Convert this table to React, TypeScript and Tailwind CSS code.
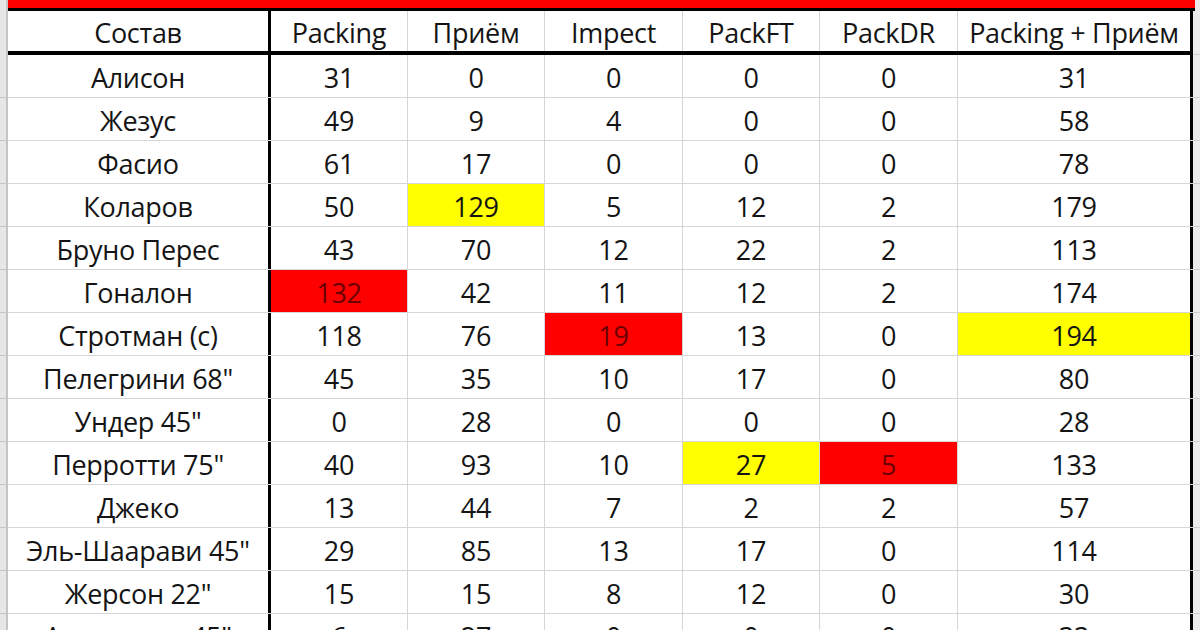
type Mark = "y" | "r" | undefined

type Row = {
  name: string
  vals: (string | [string, Mark])[]
}

const rows: Row[] = [
  { name: "Алисон", vals: ["31", "0", "0", "0", "0", "31"] },
  { name: "Жезус", vals: ["49", "9", "4", "0", "0", "58"] },
  { name: "Фасио", vals: ["61", "17", "0", "0", "0", "78"] },
  { name: "Коларов", vals: ["50", ["129", "y"], "5", "12", "2", "179"] },
  { name: "Бруно Перес", vals: ["43", "70", "12", "22", "2", "113"] },
  { name: "Гоналон", vals: [["132", "r"], "42", "11", "12", "2", "174"] },
  { name: "Стротман (с)", vals: ["118", "76", ["19", "r"], "13", "0", ["194", "y"]] },
  { name: "Пелегрини 68\"", vals: ["45", "35", "10", "17", "0", "80"] },
  { name: "Ундер 45\"", vals: ["0", "28", "0", "0", "0", "28"] },
  { name: "Перротти 75\"", vals: ["40", "93", "10", ["27", "y"], ["5", "r"], "133"] },
  { name: "Джеко", vals: ["13", "44", "7", "2", "2", "57"] },
  { name: "Эль-Шаарави 45\"", vals: ["29", "85", "13", "17", "0", "114"] },
  { name: "Жерсон 22\"", vals: ["15", "15", "8", "12", "0", "30"] },
  { name: "Антенуччи 45\"", vals: ["6", "27", "0", "0", "0", "33"] },
]

const headers = ["Packing", "Приём", "Impect", "PackFT", "PackDR", "Packing + Приём"]

// widths incl. borders, measured off the sheet
const widths = ["w-[137px]", "w-[137px]", "w-[138px]", "w-[137px]", "w-[138px]"]

function Cell({ value, idx }: { value: string | [string, Mark]; idx: number }) {
  const text = Array.isArray(value) ? value[0] : value
  const mark = Array.isArray(value) ? value[1] : undefined
  const last = idx === 5
  return (
    <div
      className={
        "h-full flex items-center justify-center shrink-0 pt-[3px] " +
        (last ? "w-[235px] border-r-[3px] border-black " : widths[idx] + " border-r border-[#d6d6d6] ") +
        (mark === "y" ? "bg-[#ffff00] text-[#141414]" : mark === "r" ? "bg-[#ff0000] text-[#6b0000]" : "text-[#141414]")
      }
    >
      {text}
    </div>
  )
}

export default function App() {
  return (
    <div
      className="w-[1200px] h-[630px] overflow-hidden bg-white flex flex-col text-[27px] leading-none tracking-[-0.3px]"
      style={{ fontFamily: "'Open Sans', Lato, sans-serif" }}
    >
      {/* red band + top rule */}
      <div className="flex shrink-0">
        <div className="w-[8px] h-[11px] bg-[#e6e6e6] border-r-2 border-[#c4c4c4]" />
        <div className="w-[1187px] flex flex-col">
          <div className="h-[8px] bg-[#ff0000]" />
          <div className="h-[3px] bg-black" />
        </div>
        <div className="flex-1 bg-[#ececec]" />
      </div>

      {/* header */}
      <div className="flex h-[44px] shrink-0">
        <div className="w-[8px] h-full bg-[#e6e6e6] border-r-2 border-[#c4c4c4]" />
        <div className="flex h-full border-b-[4px] border-black">
          <div className="w-[263px] h-full flex items-center justify-center pt-[3px] border-r-[3px] border-black text-[#141414]">
            Состав
          </div>
          {headers.map((h, i) => (
            <div
              key={h}
              className={
                "h-full flex items-center justify-center shrink-0 pt-[3px] text-[#141414] " +
                (i === 5 ? "w-[235px] border-r-[3px] border-black" : widths[i] + " border-r border-[#d6d6d6]")
              }
            >
              {h}
            </div>
          ))}
        </div>
        <div className="flex-1 bg-[#ececec] border-b border-[#cfcfcf]" />
      </div>

      {/* body */}
      {rows.map((r) => (
        <div key={r.name} className="flex h-[43px] shrink-0">
          <div className="w-[8px] h-full bg-[#e6e6e6] border-r-2 border-b border-[#c4c4c4]" />
          <div className="flex h-full border-b border-[#d6d6d6]">
            <div className="w-[263px] h-full flex items-center justify-center pt-[3px] border-r-[3px] border-black text-[#141414]">
              {r.name}
            </div>
            {r.vals.map((v, i) => (
              <Cell key={i} value={v} idx={i} />
            ))}
          </div>
          <div className="flex-1 bg-[#ececec] border-b border-[#cfcfcf]" />
        </div>
      ))}
    </div>
  )
}
